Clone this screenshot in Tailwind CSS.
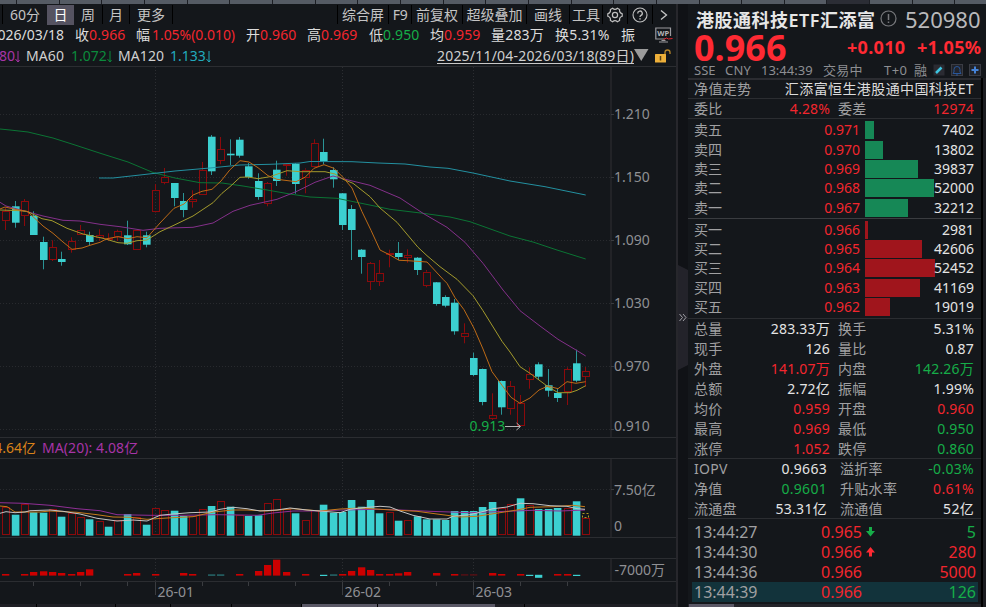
<!DOCTYPE html>
<html lang="zh-CN">
<head>
    <meta charset="UTF-8">
    <meta name="viewport" content="width=device-width, initial-scale=1.0">
    <title>港股通科技ETF汇添富 520980</title>
    <script src="https://cdn.jsdelivr.net/npm/@tailwindcss/browser@4"></script>
</head>
<body class="w-[986px] h-[607px] overflow-hidden bg-[#14171b] font-['Noto_Sans','Noto_Sans_CJK_SC',sans-serif] text-[14px] leading-none text-[#d0d0d0] whitespace-nowrap">
<div class="flex flex-col w-full h-full">
    <!-- Top strip -->
    <div id="strip" class="flex h-[4px] shrink-0 bg-[#555b64] overflow-hidden"></div>

    <div class="flex h-[603px]">
        <!-- Chart side -->
        <main class="w-[676px] shrink-0 flex flex-col overflow-hidden">
            <!-- Period tabs and tools -->
            <nav class="flex items-center h-[21px] pl-[2px] text-[#c4c4c4]">
                <span class="w-[45px] h-[19px] flex items-center justify-center border-l border-black">60分</span>
                <span class="w-[27px] h-[20px] flex items-center justify-center bg-[#555361] text-white">日</span>
                <span class="w-[29px] h-[19px] flex items-center justify-center border-r border-black">周</span>
                <span class="w-[27px] h-[19px] flex items-center justify-center border-r border-black">月</span>
                <span class="w-[43px] h-[19px] flex items-center justify-center border-r border-black">更多</span>
                <span class="w-[164px]"></span>
                <span class="w-[51px] h-[19px] flex items-center justify-center border-l border-black">综合屏</span>
                <span class="w-[23px] h-[19px] flex items-center justify-center border-l border-black tracking-[-0.5px]">F9</span>
                <span class="w-[51px] h-[19px] flex items-center justify-center border-l border-black">前复权</span>
                <span class="w-[64px] h-[19px] flex items-center justify-center border-l border-black">超级叠加</span>
                <span class="w-[43px] h-[19px] flex items-center justify-center border-l border-black">画线</span>
                <span class="w-[33px] h-[19px] flex items-center justify-center border-l border-black">工具</span>
                <span class="w-[25px] h-[19px] flex items-center justify-center border-l border-black">
                    <svg class="w-[16px] h-[16px]" viewBox="0 0 16 16" fill="none" stroke="#c0c0c0" stroke-width="1.2">
                        <path d="M5.600 1.200Q8 3.400 10.400 1.200L12.600 2.500Q12.100 5.700 15.200 6.700V9.300Q12.100 10.300 12.600 13.500L10.400 14.800Q8 12.600 5.600 14.800L3.400 13.500Q3.900 10.300.8 9.300V6.700Q3.900 5.700 3.400 2.500z"/>
                        <circle cx="8" cy="8" r="2.600"/>
                    </svg>
                </span>
                <span class="w-[25px] h-[19px] flex items-center justify-center border-l border-black">
                    <svg class="w-[16px] h-[16px]" viewBox="0 0 16 16" fill="none" stroke="#c0c0c0" stroke-width="1.1">
                        <circle cx="8" cy="8" r="7"/>
                        <path d="M5.700 6.400a2.300 2.300 0 1 1 3.300 2Q8 8.900 8 10" stroke-width="1.300"/>
                        <path d="M8 11.200v1.400" stroke-width="1.500"/>
                    </svg>
                </span>
                <span class="w-[23px] h-[19px] flex items-center justify-center border-l border-black">
                    <svg class="w-[8px] h-[10px]" viewBox="0 0 8 10" fill="none" stroke="#c8c8c8" stroke-width="1.3"><path d="M1 .5L6.500 5 1 9.500"/></svg>
                </span>
            </nav>

            <!-- Quote summary -->
            <div class="flex items-center h-[20px] text-[#dcdcdc]">
                <span class="w-[64px] mr-[11px] flex justify-end">2026/03/18</span>
                <span class="w-[61px] tracking-[0.1px]">收<b class="font-normal text-[#f2262e]">0.966</b></span>
                <span class="w-[110px]">幅<b class="ml-[2px] font-normal text-[#f2262e] tracking-[-0.05px]">1.05%(0.010)</b></span>
                <span class="w-[61px] tracking-[0.1px]">开<b class="font-normal text-[#f2262e]">0.960</b></span>
                <span class="w-[62px] tracking-[0.1px]">高<b class="font-normal text-[#f2262e]">0.969</b></span>
                <span class="w-[61px] tracking-[0.1px]">低<b class="font-normal text-[#16ad48]">0.950</b></span>
                <span class="w-[61px] tracking-[0.1px]">均<b class="font-normal text-[#f2262e]">0.959</b></span>
                <span class="w-[64px] tracking-[0.2px]">量283万</span>
                <span class="w-[66px] tracking-[0.2px]">换5.31%</span>
                <span class="w-[34px]">振</span>
                <svg class="w-[18px] h-[16px] shrink-0" viewBox="0 0 18 16" fill="none" stroke="#9a9a9e">
                    <path d="M15.500 9V1H.8v11h9M4 15h9M6.500 13.500h4" stroke-width="1.200"/>
                    <text x="2.300" y="9.300" font-size="7.500" font-weight="700" fill="#b5b5b8" stroke="none">WP</text>
                    <path d="M8.500 12.500l3-1.500 2 1 4-.5" stroke="#e0262e"/>
                </svg>
            </div>

            <!-- Moving averages -->
            <div class="flex items-center h-[22px] pt-px border-b border-[#2b2d31]">
                <span class="w-[20px] mr-[6px] flex items-center justify-end text-[#a734a7]">1.080<svg class="w-[5px] h-[13px] shrink-0" viewBox="0 0 5 13" fill="none" stroke="currentColor"><path d="M3 1v11M0.500 9L3 12l1.500-2"/></svg></span>
                <span class="w-[45px] tracking-[0.1px]">MA60</span>
                <span class="w-[47px] flex items-center text-[#0b8a3c]">1.072<svg class="w-[5px] h-[13px]" viewBox="0 0 5 13" fill="none" stroke="currentColor"><path d="M3 1v11M0.500 9L3 12l1.500-2"/></svg></span>
                <span class="w-[52px] tracking-[0.1px]">MA120</span>
                <span class="flex items-center text-[#22a9bd]">1.133<svg class="w-[5px] h-[13px]" viewBox="0 0 5 13" fill="none" stroke="currentColor"><path d="M3 1v11M0.500 9L3 12l1.500-2"/></svg></span>
                <span class="ml-auto w-[197px] h-[15px] border-b border-[#c8c8c8] tracking-[0.2px]">2025/11/04-2026/03/18(89日)</span>
                <svg class="w-[15px] h-[12px] mt-[-2px]" viewBox="0 0 15 12"><path d="M0 0h14.500L7.250 12z" fill="#9b9b9b"/></svg>
                <svg class="ml-[6px] mr-[5px] w-[16px] h-[14px]" viewBox="0 0 16 14" fill="none">
                    <path d="M10 6V3.500a2.500 2.500 0 0 1 5 0V5" stroke="#b58428" stroke-width="1.300"/>
                    <rect y="5" width="11" height="8.500" rx=".5" fill="#eeb03a"/>
                    <path d="M5.500 7v4.500" stroke="#5b4210" stroke-width="1.500"/>
                </svg>
            </div>

            <svg id="price" class="w-[676px] h-[370px] shrink-0" viewBox="0 67 676 370"></svg>
            <div class="h-[22px] shrink-0 flex items-center border-y border-[#2b2d31]">
                <span class="w-[36px] mr-[6px] flex justify-end text-[#d9821a]">4.64亿</span>
                <span class="text-[#a734a7] tracking-[0.08px]">MA(20): 4.08亿</span>
            </div>
            <svg id="volume" class="w-[676px] h-[78px] shrink-0" viewBox="0 459 676 78"></svg>
            <div class="h-[22px] shrink-0 border-y border-[#2b2d31]"></div>
            <svg id="flow" class="w-[676px] h-[22px] shrink-0" viewBox="0 559 676 22"></svg>
            <svg id="axis" class="w-[676px] h-[23px] shrink-0 border-t border-[#2b2d31]" viewBox="0 582 676 22"></svg>
            <!-- Scroll thumb -->
            <div class="flex h-[3px] bg-[#1f1f25]">
                <i class="w-[37px] border-r border-black"></i><i class="w-[79px] border-r border-black"></i><i class="w-[55px] border-r border-black"></i><i class="w-[61px] border-r border-black"></i><i class="w-[70px] border-r border-black"></i>
                <i class="w-[76px] border-r border-black bg-[#5a5866]"></i><i class="w-[117px] bg-[#5a5866]"></i><i class="w-[30px] border-r border-black"></i>
            </div>
        </main>

        <!-- Collapse handle -->
        <div class="w-[12px] shrink-0 border-l-2 border-[#27272c] bg-[#101216] pt-[261px]">
            <svg class="w-[10px] h-[105px]" viewBox="0 0 10 105">
                <path d="M0 0L10 5v95L0 105z" fill="#23232a"/>
                <path d="M1.500 49l3 3.500-3 3.500M5 49l3 3.500-3 3.500" fill="none" stroke="#a0a0a6"/>
            </svg>
        </div>

        <!-- Quote panel -->
        <aside class="w-[298px] shrink-0 flex flex-col overflow-hidden">
            <div class="flex items-center h-[31px] pl-[8px]">
                <h1 class="w-[184px] text-[18px] font-semibold tracking-[0.5px] text-[#e6e6e6]">港股通科技ETF汇添富</h1>
                <svg class="w-[17px] h-[17px] mt-[-2px]" viewBox="0 0 17 17" fill="none" stroke="#77787c" stroke-width="1.200"><circle cx="8.500" cy="8.500" r="7.500"/><path d="M8.500 4v6M8.500 11.500v1.500" stroke-width="1.500"/></svg>
                <span class="ml-[8px] mt-[-2px] text-[22px] text-[#b9b9bb]">520980</span>
            </div>
            <div class="flex items-center h-[26px] pl-[6px] font-bold text-[#ff2a33]">
                <span class="w-[153px] text-[36px] leading-[26px]">0.966</span>
                <span class="w-[70px] mt-[-3px] text-[18px] tracking-[0.3px]">+0.010</span>
                <span class="mt-[-3px] text-[18px] tracking-[0.3px]">+1.05%</span>
            </div>
            <div class="flex items-center h-[17px] pt-[2px] pl-[6px] text-[13px] text-[#8d8e92]">
                <span class="w-[31px]">SSE</span>
                <span class="w-[36px] tracking-[0.2px]">CNY</span>
                <span class="w-[62px]">13:44:39</span>
                <span class="w-[61px] tracking-[0.3px]">交易中</span>
                <span class="w-[30px] tracking-[0.4px]">T+0</span>
                <span class="w-[19px]">融</span>
                <svg class="w-[50px] h-[13px]" viewBox="0 0 50 13" fill="none">
                    <rect x=".5" y=".5" width="11" height="11" fill="#2a2b32"/><path d="M3 9l5.500-5.500" stroke="#3ec5e0" stroke-width="2.500"/>
                    <rect x="18.500" y=".5" width="11" height="11" fill="#22242b" stroke="#3a3c44"/><path d="M20 9.500h8l-1-1.500V5.500a3 3 0 0 0-6 0V8zM23 11h2" stroke="#28569a"/>
                    <rect x="36.500" y=".5" width="11" height="11" fill="#22242b" stroke="#3a3c44"/><path d="M42 2.500v7M38.500 6h7" stroke="#4583d8" stroke-width="2"/>
                </svg>
            </div>

            <div class="flex h-[529px]">
                <div class="w-[293px] flex flex-col border-t-2 border-[#2b2c31]">
                    <div class="flex items-center justify-between h-[19px] pl-[6px] pr-[7px] border-b border-[#2b2d31] tracking-[0.4px]">
                        <span class="text-[#a0a0a2]">净值走势</span><span class="text-[#dcdcdc]">汇添富恒生港股通中国科技ET</span>
                    </div>
                    <div class="flex items-center h-[20px] pl-[6px] border-b border-[#2b2d31] text-[#a0a0a2] tracking-[0.15px]">
                        <span class="w-[60px]">委比</span><span class="w-[76px] text-right text-[#f2262e]">4.28%</span>
                        <span class="ml-[8px] w-[60px]">委差</span><span class="w-[76px] text-right text-[#f2262e]">12974</span>
                    </div>
                    <div id="asks" class="h-[100px] pt-[1.500px] border-b border-[#3a3c40]"></div>
                    <div id="bids" class="h-[100px] pt-px border-b border-[#2b2d31]"></div>
                    <div id="stats" class="h-[140px] border-b border-[#2b2d31]"></div>
                    <div id="fund" class="h-[60px] border-b border-[#2b2d31]"></div>
                    <div id="ticks" class="pt-[3px] pl-[4px] pr-[3px] h-[85px] text-[16px]"></div>
                    <div class="h-[3px] bg-[#25252b]"><i class="block ml-[1px] w-[45px] h-[3px] bg-[#5a5866]"></i></div>
                </div>
                <div class="w-[5px] border-l-2 border-black bg-[#1c1d21]"></div>
            </div>
        </aside>
    </div>
</div>

<script>
    const RED = 'text-[#f2262e]', GREEN = 'text-[#16ad48]', WHITE = 'text-[#e4e4e4]';
    const byId = id => document.getElementById(id);

    // Top strip segments
    let strip = '<i class="w-[17px] shrink-0 border-r border-[#1c1e24]"></i>';
    for (let i = 0; i < 23; i++) {
        strip += `<i class="w-[42.67px] shrink-0 border-r border-[#1c1e24] ${i === 19 ? 'bg-[#2b2d35]' : ''}"></i>`;
    }
    byId('strip').innerHTML = strip;

    // Order book: label, price, bar length, volume
    function book(rows, bar) {
        return rows.map(([label, price, len, vol]) => `
            <div class="flex items-center h-[19.4px] pl-[6px] pr-[6px]">
                <span class="w-[86px] text-[#a0a0a2]">${label}</span>
                <span class="w-[80px] text-right ${RED}">${price}</span>
                <div class="ml-[5px] w-[109px] grid items-center">
                    <i class="col-start-1 row-start-1 h-[18px] ${bar}" style="width:${len}px"></i>
                    <span class="col-start-1 row-start-1 text-right ${WHITE}">${vol}</span>
                </div>
            </div>`).join('');
    }

    byId('asks').innerHTML = book([
        ['卖五', '0.971', 9, '7402'], ['卖四', '0.970', 18, '13802'], ['卖三', '0.969', 52.5, '39837'],
        ['卖二', '0.968', 69, '52000'], ['卖一', '0.967', 42.5, '32212'],
    ], 'bg-[#168856]');
    byId('bids').innerHTML = book([
        ['买一', '0.966', 3, '2981'], ['买二', '0.965', 56.5, '42606'], ['买三', '0.964', 70, '52452'],
        ['买四', '0.963', 54.5, '41169'], ['买五', '0.962', 25, '19019'],
    ], 'bg-[#a0151c]');

    byId('stats').innerHTML = [
        ['总量', '283.33万', WHITE, '换手', '5.31%', WHITE],
        ['现手', '126', WHITE, '量比', '0.87', WHITE],
        ['外盘', '141.07万', RED, '内盘', '142.26万', GREEN],
        ['总额', '2.72亿', WHITE, '振幅', '1.99%', WHITE],
        ['均价', '0.959', RED, '开盘', '0.960', RED],
        ['最高', '0.969', RED, '最低', '0.950', GREEN],
        ['涨停', '1.052', RED, '跌停', '0.860', GREEN],
    ].map(r => `
        <div class="flex items-center h-[20px] pl-[6px] text-[#a0a0a2] tracking-[0.2px]">
            <span class="w-[60px]">${r[0]}</span><span class="w-[76px] text-right ${r[2]}">${r[1]}</span>
            <span class="ml-[8px] w-[60px]">${r[3]}</span><span class="w-[76px] text-right ${r[5]}">${r[4]}</span>
        </div>`).join('');

    byId('fund').innerHTML = [
        ['IOPV', '0.9663', WHITE, '溢折率', '-0.03%', GREEN],
        ['净值', '0.9601', GREEN, '升贴水率', '0.61%', RED],
        ['流通盘', '53.31亿', WHITE, '流通值', '52亿', WHITE],
    ].map(r => `
        <div class="flex items-center h-[20px] pl-[6px] text-[#a0a0a2] tracking-[0.3px]">
            <span class="w-[60px]">${r[0]}</span><span class="w-[73px] text-right ${r[2]}">${r[1]}</span>
            <span class="ml-[13px] w-[60px]">${r[3]}</span><span class="w-[74px] text-right ${r[5]}">${r[4]}</span>
        </div>`).join('');

    const down = '<svg class="w-[9px] h-[10px]" viewBox="0 0 9 10"><path d="M3 0h3v4h3L4.500 9.500 0 4h3z" fill="#16ad48"/></svg>';
    const up = '<svg class="w-[9px] h-[10px]" viewBox="0 0 9 10"><path d="M3 9.500h3v-4h3L4.500 0 0 5.500h3z" fill="#ff2a33"/></svg>';
    byId('ticks').innerHTML = [
        ['13:44:27', '0.965', down, '5', GREEN, ''],
        ['13:44:30', '0.966', up, '280', RED, ''],
        ['13:44:36', '0.966', '', '5000', RED, ''],
        ['13:44:39', '0.966', '', '126', GREEN, 'bg-[#12333b]'],
    ].map(r => `
        <div class="flex items-center h-[20px] pl-[2px] pr-[2px] ${r[5]}">
            <span class="w-[90px] text-[#a0a0a2]">${r[0]}</span>
            <span class="w-[78px] text-right ${RED}">${r[1]}</span>
            <span class="w-[20px] pl-[4px]">${r[2]}</span>
            <span class="ml-auto ${r[4]}">${r[3]}</span>
        </div>`).join('');

    // ---- Charts ----
    const cx = i => 5.7 + i * 9.355;
    const months = [[16, '26-01'], [36, '26-02'], [50, '26-03']];
    const CYAN = '#3cd0d0', DARKRED = '#8c0a0c';

    const poly = (pts, color) =>
        `<polyline points="${pts}" fill="none" stroke="${color}" stroke-width="1"/>`;
    const label = (x, y, text, color = '#8f9094') =>
        `<text x="${x}" y="${y}" font-size="14" fill="${color}">${text}</text>`;

    function frame(top, bottom, rows) {
        let s = `<path d="M611 ${top}V${bottom}" stroke="#27292d" stroke-width="1.500"/>`;
        months.forEach(([i]) => {
            s += `<path d="M${Math.floor(cx(i)) + .5} ${top}V${bottom}" stroke="#2c2e32" stroke-dasharray="1 2"/>`;
        });
        rows.forEach(y => {
            s += `<path d="M0 ${y}H611" stroke="#282a2e" stroke-dasharray="1 2"/><path d="M611 ${y}h3" stroke="#3a3c40"/>`;
        });
        return s;
    }

    // [up/down, high, body top, body bottom, low]
    const candles = [
        ['r', 208, 211.3, 220.7, 230], ['c', 201, 206.3, 222.7, 227.7], ['r', 199, 201, 215.7, 226],
        ['c', 211.3, 215.7, 235, 235], ['c', 236.7, 242, 260, 269.3], ['r', 240.3, 247.3, 260, 261],
        ['c', 251.7, 259, 262, 265.7], ['r', 237.3, 241, 249.7, 252.7], ['r', 225, 230.3, 234.7, 235],
        ['c', 231.7, 235, 242, 245.3], ['r', 229.3, 235.3, 238.3, 240.7], ['r', 233.3, 238, 239.3, 241],
        ['r', 229.7, 231, 236.7, 241], ['c', 220.7, 235.3, 244.3, 245], ['r', 230, 230.3, 250, 250],
        ['c', 231.7, 235.3, 244.7, 247.3], ['r', 184, 190.3, 211.7, 212.5], ['r', 168, 177.3, 182.7, 184.3],
        ['c', 183, 183, 198, 206.3], ['c', 193, 201, 210, 217.3], ['r', 190.3, 199.3, 201.7, 207.7],
        ['r', 162, 170, 194.7, 195], ['c', 135, 136.7, 171.3, 175], ['r', 137, 149.3, 160.7, 164.3],
        ['c', 139.3, 153.7, 155.3, 165], ['c', 137, 139.7, 155.7, 157.7], ['c', 163, 166.3, 177, 178.7],
        ['c', 173.3, 181, 197, 199.7], ['r', 182, 183, 203.7, 206.3], ['c', 160.7, 169.7, 181, 186],
        ['r', 163, 164.3, 165.7, 175.7], ['c', 163, 163.7, 184, 193.7], ['r', 168.3, 169.7, 178.3, 193.3],
        ['r', 139.3, 143, 166.7, 167], ['c', 138.7, 152, 161, 164.3], ['c', 167.3, 170, 179.3, 187.7],
        ['c', 193, 193.3, 225, 230], ['c', 205, 209, 230, 260], ['c', 249, 249.7, 257, 273.7],
        ['r', 262, 263, 281.7, 290], ['r', 260, 273, 281.7, 286], ['r', 249.7, 253.3, 254.3, 267.3],
        ['c', 242, 253, 257, 260], ['r', 249.3, 255, 257.7, 262.7], ['c', 257, 257.7, 270, 275],
        ['r', 270, 271.7, 285.7, 287.3], ['c', 282, 282.3, 304, 305.7], ['c', 295.3, 297, 305.7, 307.3],
        ['c', 299, 302.7, 331.3, 334.7], ['r', 323.3, 332.7, 337, 343.3], ['c', 352.7, 358, 375, 376],
        ['c', 368.5, 369, 402, 405.3], ['r', 393.3, 415, 418.7, 420], ['c', 380.5, 381, 407.3, 414.7],
        ['r', 381, 386, 409.3, 414.7], ['r', 395, 403.3, 425.7, 426], ['r', 367.3, 374, 379.7, 388.7],
        ['c', 362.3, 364.3, 376.7, 380], ['c', 369, 385.3, 390.7, 396.7], ['c', 388.3, 393, 398, 402],
        ['r', 367.3, 369, 392.3, 405], ['c', 349.7, 363.3, 380.7, 382.3], ['r', 367, 371.3, 376.7, 386.7],
    ];

    function box(i, top, bottom, color) {
        const x = Math.round(cx(i) - 3.5) + .5, t = Math.round(top) + .5;
        return `<rect x="${x}" y="${t}" width="7" height="${Math.max(1, Math.round(bottom) - t - .5)}" fill="none" stroke="${color}"/>`;
    }

    let s = frame(67, 437, [114.5, 177.5, 240.5, 303.5, 366.5, 429.5]);
    candles.forEach(([t, h, a, b, l], i) => {
        const x = Math.floor(cx(i)) + .5;
        if (t === 'c') {
            s += `<path d="M${x} ${h}V${l}" stroke="#2a9496"/><rect x="${x - 3.5}" y="${a}" width="7.6" height="${b - a}" fill="${CYAN}"/>`;
        } else {
            s += `<path d="M${x} ${h}V${a}M${x} ${b}V${l}" stroke="${DARKRED}"/>` + box(i, a, b, DARKRED);
        }
    });
    s += poly('0,129 10,130 28,132 53,138 75,145 101,153.5 128,162 153,172.5 175,178 200,182.7 222,183 243,186 267,190 290,194 310,197 337,198.3 373,205.7 390,209.3 423,213.3 450,217 470,221.7 510,236 533,242 557,250 585.7,259', '#0b7434');
    s += poly('99,178 113,178 140,175 175,171 210,168 240,165 270,164.3 300,163 310,161.5 352,161.7 378,163 405,164 430,167 448,168.3 473,173 510,181 545,186.7 585.7,195', '#2390a0');
    s += poly('0,202.3 6,206 27,211.7 43,216 63,220.3 80,221 100,224.3 120,226.7 143,230.3 160,228.3 193,227.3 213,223 233,211.3 250,205.3 277,199.3 296,191.7 303,188.3 315,182.3 333,176 347,179.7 370,185.3 400,198 423,213.3 447,227.3 465,242.3 483,263.3 495,279.3 503,290 520,310.7 540,326 558,339.3 576,350 585.7,356', '#84308a');
    s += poly('0,210 20,210.7 28,211.7 42,218.7 52,220.7 67,228.3 83,234 103,238.3 118,242.7 127,243.3 137,240.7 147,240 160,231.7 173,225.7 193,216 213,202.7 222,193.3 230,186.7 240,177.3 248,177 258,178.7 270,176.7 287,170.7 300,171.7 325,171.7 335,174 343,179.3 353,183.3 370,196.7 380,208 397,222.3 418,247.3 427,255.7 440,266.7 457,279.3 473,295.7 483,310.7 502,341.3 510,352 520,366.7 530,373.3 548,386.7 558,392.7 570,392.7 577,390.3 585.7,385.7', '#a39a2c');
    s += poly('0,209 5,207 15,209.3 27,211.3 33,216.7 43,226 53,233.3 63,242 72,249.3 82,248 90,245.3 100,242.3 107,238.7 118,236.7 128,238.7 137,236.7 147,237.7 160,223 174,208.3 184,204 193,195 202,191.3 212,189.3 221,181 230,169.7 240,160.7 249,162 258,167.7 268,175.7 277,179.3 296,181.7 305,177.3 314,168.3 324,164.7 334,168.3 343,177.3 352,188 362,211.7 371,230.3 380,250 390,255 399,260.3 408,260.7 427,262 443,279.3 447,283.3 455,297.7 464,309.7 474,328.3 483,349 492,371.7 502,385.3 511,397.3 520,403.3 530,398 539,390 548,386 558,388.7 567,381.7 576,383.3 585.7,381.7', '#bd6a16');
    [['1.210', 119], ['1.150', 182], ['1.090', 245], ['1.030', 308], ['0.970', 371], ['0.910', 431]].forEach(([t, y]) => {
        s += label(614, y, t);
    });
    s += label(469.5, 431, '0.913', '#16ad48') + '<path d="M505 426.500h15M516.500 423l4 3.500-4 3.500" fill="none" stroke="#b4b4b4"/>';
    byId('price').innerHTML = s;

    // Volume bar tops
    const volumes = [
        'r506.7', 'c514.7', 'r504', 'c512.3', 'c512.7', 'r509.3', 'c516.7', 'r513.3', 'r517.3', 'c519.3', 'r521', 'c526.7', 'r520',
        'c514', 'r517.3', 'c524.7', 'r508', 'r510.3', 'c510.7', 'c516', 'r516', 'r509', 'c506', 'r501.3', 'c506.7', 'r514.7',
        'c516', 'c515.3', 'r503', 'r499', 'r509.3', 'c513.3', 'r520', 'r510', 'c504.7', 'c512.7', 'c512', 'c500', 'c506.7',
        'c500', 'c513.3', 'r512', 'c520.7', 'r520.3', 'c516.3', 'c519.3', 'c519.3', 'c520', 'c511', 'c511', 'c511', 'c507',
        'c502', 'r507.7', 'r504', 'c498.3', 'r505.3', 'c509', 'c509', 'c508', 'r507.7', 'c501.3', 'r518.3',
    ];
    s = frame(459, 537, [489.5]);
    volumes.forEach((v, i) => {
        const y = +v.slice(1);
        s += v[0] === 'c' ? `<rect x="${Math.floor(cx(i)) - 3.2}" y="${y}" width="7.6" height="${535.7 - y}" fill="${CYAN}"/>` : box(i, y, 535, DARKRED);
    });
    s += '<rect x="582.500" y="513.500" width="6" height="4" fill="none" stroke="#b09a20" stroke-dasharray="2 2"/>';
    s += poly('0,502.7 23,503.3 50,505.3 77,508.7 100,510.7 117,514.7 150,515.3 183,515.3 217,514.7 240,515 257,515.3 273,513 293,511 320,511 343,510 377,509.3 400,510 430,511.3 470,512.7 507,511.3 533,510.3 560,511 585,510', '#8f2f95');
    s += poly('0,506 7,506.7 15,512 40,512 50,511 77,512.3 97,514.7 113,517 130,517.3 147,519.3 167,518 193,516.7 213,512 233,510 247,510 267,511 293,508.7 320,511 340,509 360,508 387,509.7 417,511.3 437,514 460,517 477,516.3 500,512.7 517,510 530,507.3 553,506.7 573,505.3 585,506.7', '#c57a1c');
    s += poly('0,513.3 6,511.7 15,512.7 25,512 30,510.7 50,510 63,511.3 80,514 97,518.3 117,521 133,520 147,521 160,515.3 173,514 190,512.7 210,512 220,509.3 233,507.3 247,508.7 260,511 277,510 290,508 307,510 320,511 340,512.7 350,509.3 363,507.7 380,506.3 390,507 400,511 413,515.3 430,519 447,519 453,516.3 470,514.7 480,512.3 493,508.7 507,507 520,503.3 533,503.7 550,505.7 567,506.3 577,508.7 585,509.3', '#c4c4c4');
    s += label(614, 495, '7.50亿') + label(614, 531, '0');
    byId('volume').innerHTML = s;

    // Capital flow bars: index, top
    s = frame(559, 581, []);
    const flows = [
        [0, 574], [2, 574], [3, 572], [4, 571.3], [5, 572], [6, 573], [7, 574], [8, 572], [9, 569.3], [13, 574], [14, 573],
        [16, 574], [19, 573], [20, 574], [25, 574], [27, 571], [28, 565], [29, 559.7], [30, 572], [32, 574], [36, 574],
        [37, 571], [38, 567.3], [39, 570], [40, 574], [41, 574], [42, 573.3], [43, 572], [46, 573], [48, 574], [52, 573],
        [53, 574], [55, 574], [59, 574], [60, 574],
    ];
    const bar = (i, t, b, c) => `<rect x="${Math.floor(cx(i)) - 3}" y="${t}" width="7.3" height="${b - t}" fill="${c}"/>`;
    flows.forEach(([i, t]) => s += bar(i, t, 575.6, '#cc0000'));
    [22, 23, 35].forEach(i => s += bar(i, 574.2, 576, '#235a5d'));
    [49, 50].forEach(i => s += bar(i, 574.2, 575.6, '#5a1014'));
    [34, 56, 61].forEach(i => s += bar(i, 574.8, 576, CYAN));
    s += bar(57, 574.8, 577.8, CYAN) + label(614.5, 575, '-7000万');
    byId('flow').innerHTML = s;

    // Time axis
    s = '';
    [3, 8, 13, 21, 26, 31, 41, 46, 55, 60].forEach(i => {
        s += `<path d="M${Math.floor(cx(i)) + .5} 582v4" stroke="#3a3c40"/>`;
    });
    months.forEach(([i, t]) => {
        const x = Math.floor(cx(i)) + .5;
        s += `<path d="M${x} 582v13" stroke="#3a3c40"/>` + label(x + 2, 597, t);
    });
    byId('axis').innerHTML = s;
</script>
</body>
</html>
